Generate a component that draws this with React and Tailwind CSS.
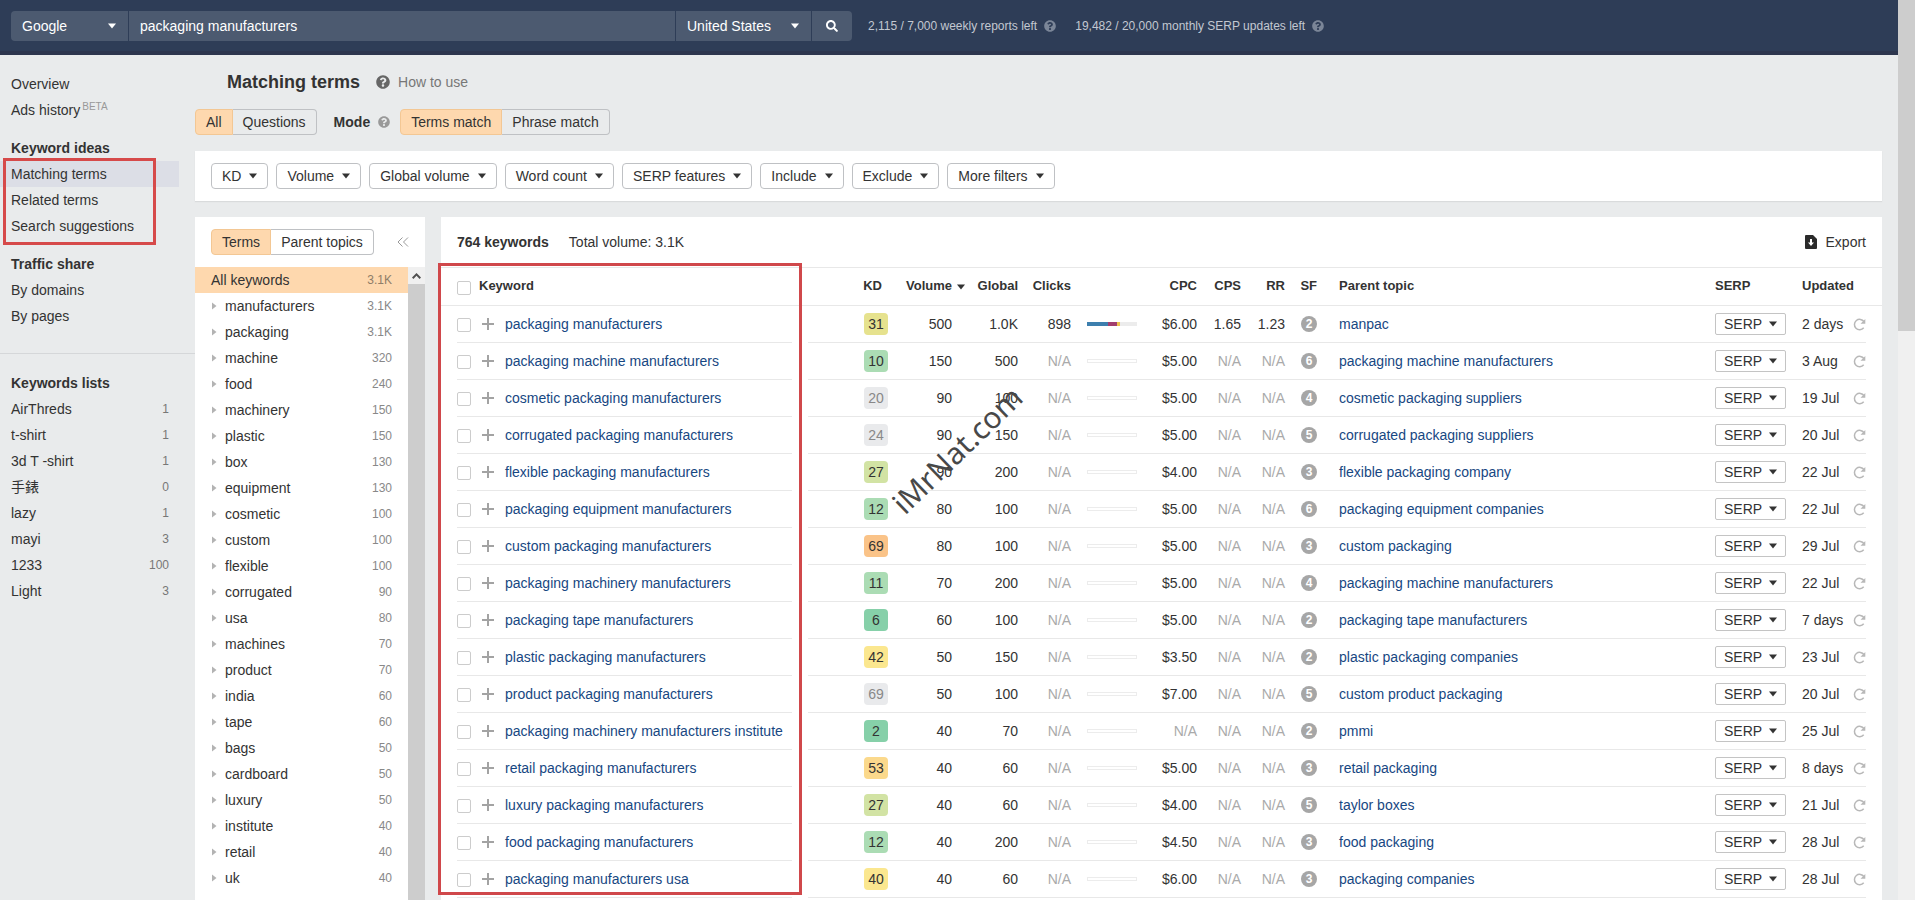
import React from "react";
import { FaQuestionCircle, FaSearch } from "react-icons/fa";

const KEYWORD_LISTS = [
  ["AirThreds", "1"],
  ["t-shirt", "1"],
  ["3d T -shirt", "1"],
  ["手錶", "0"],
  ["lazy", "1"],
  ["mayi", "3"],
  ["1233", "100"],
  ["Light", "3"],
];

const FILTERS = [
  "KD",
  "Volume",
  "Global volume",
  "Word count",
  "SERP features",
  "Include",
  "Exclude",
  "More filters",
];

const TERMS = [
  ["manufacturers", "3.1K"],
  ["packaging", "3.1K"],
  ["machine", "320"],
  ["food", "240"],
  ["machinery", "150"],
  ["plastic", "150"],
  ["box", "130"],
  ["equipment", "130"],
  ["cosmetic", "100"],
  ["custom", "100"],
  ["flexible", "100"],
  ["corrugated", "90"],
  ["usa", "80"],
  ["machines", "70"],
  ["product", "70"],
  ["india", "60"],
  ["tape", "60"],
  ["bags", "50"],
  ["cardboard", "50"],
  ["luxury", "50"],
  ["institute", "40"],
  ["retail", "40"],
  ["uk", "40"],
];

const KD_COLORS = {
  emerald: "bg-[#86d0a9] text-[#333]",
  green: "bg-[#abdcb4] text-[#333]",
  lime: "bg-[#d2e3a4] text-[#333]",
  olive: "bg-[#e6e28e] text-[#333]",
  yellow: "bg-[#fbe78f] text-[#333]",
  amber: "bg-[#fbd98c] text-[#333]",
  orange: "bg-[#fac388] text-[#333]",
  gray: "bg-[#e9eaec] text-[#888]",
};

const ROWS = [
  { kw: "packaging manufacturers", kd: "31", tone: "olive", vol: "500", global: "1.0K", clicks: "898", cpc: "$6.00", cps: "1.65", rr: "1.23", sf: "2", parent: "manpac", updated: "2 days" },
  { kw: "packaging machine manufacturers", kd: "10", tone: "green", vol: "150", global: "500", cpc: "$5.00", sf: "6", parent: "packaging machine manufacturers", updated: "3 Aug" },
  { kw: "cosmetic packaging manufacturers", kd: "20", tone: "gray", vol: "90", global: "100", cpc: "$5.00", sf: "4", parent: "cosmetic packaging suppliers", updated: "19 Jul" },
  { kw: "corrugated packaging manufacturers", kd: "24", tone: "gray", vol: "90", global: "150", cpc: "$5.00", sf: "5", parent: "corrugated packaging suppliers", updated: "20 Jul" },
  { kw: "flexible packaging manufacturers", kd: "27", tone: "lime", vol: "90", global: "200", cpc: "$4.00", sf: "3", parent: "flexible packaging company", updated: "22 Jul" },
  { kw: "packaging equipment manufacturers", kd: "12", tone: "green", vol: "80", global: "100", cpc: "$5.00", sf: "6", parent: "packaging equipment companies", updated: "22 Jul" },
  { kw: "custom packaging manufacturers", kd: "69", tone: "orange", vol: "80", global: "100", cpc: "$5.00", sf: "3", parent: "custom packaging", updated: "29 Jul" },
  { kw: "packaging machinery manufacturers", kd: "11", tone: "green", vol: "70", global: "200", cpc: "$5.00", sf: "4", parent: "packaging machine manufacturers", updated: "22 Jul" },
  { kw: "packaging tape manufacturers", kd: "6", tone: "emerald", vol: "60", global: "100", cpc: "$5.00", sf: "2", parent: "packaging tape manufacturers", updated: "7 days" },
  { kw: "plastic packaging manufacturers", kd: "42", tone: "yellow", vol: "50", global: "150", cpc: "$3.50", sf: "2", parent: "plastic packaging companies", updated: "23 Jul" },
  { kw: "product packaging manufacturers", kd: "69", tone: "gray", vol: "50", global: "100", cpc: "$7.00", sf: "5", parent: "custom product packaging", updated: "20 Jul" },
  { kw: "packaging machinery manufacturers institute", kd: "2", tone: "emerald", vol: "40", global: "70", sf: "2", parent: "pmmi", updated: "25 Jul" },
  { kw: "retail packaging manufacturers", kd: "53", tone: "amber", vol: "40", global: "60", cpc: "$5.00", sf: "3", parent: "retail packaging", updated: "8 days" },
  { kw: "luxury packaging manufacturers", kd: "27", tone: "lime", vol: "40", global: "60", cpc: "$4.00", sf: "5", parent: "taylor boxes", updated: "21 Jul" },
  { kw: "food packaging manufacturers", kd: "12", tone: "green", vol: "40", global: "200", cpc: "$4.50", sf: "3", parent: "food packaging", updated: "28 Jul" },
  { kw: "packaging manufacturers usa", kd: "40", tone: "yellow", vol: "40", global: "60", cpc: "$6.00", sf: "3", parent: "packaging companies", updated: "28 Jul" },
];

function Caret({ className = "" }) {
  return (
    <svg viewBox="0 0 8 6" className={"h-[6px] w-2 shrink-0 fill-current " + className} aria-hidden="true">
      <path d="M0 .5h8L4 5.500z" />
    </svg>
  );
}

function HeaderSelect({ label, value, className }) {
  return (
    <label className={"relative flex items-center bg-[#4c5a70] " + className}>
      <span className="sr-only">{label}</span>
      <select className="h-full w-full cursor-pointer appearance-none bg-transparent pl-[11px] text-sm leading-6 text-white outline-none">
        <option>{value}</option>
      </select>
      <Caret className="pointer-events-none absolute right-3" />
    </label>
  );
}

function Segmented({ items }) {
  return (
    <div className="flex h-[26px] shrink-0">
      {items.map((item, i) => (
        <button
          key={item}
          type="button"
          aria-pressed={i === 0}
          className={
            i === 0
              ? "rounded-l-sm border border-[#f3c794] bg-[#fed8ae] px-[10px] text-sm leading-6 whitespace-nowrap"
              : "rounded-r-sm border border-l-0 border-[#bfc1c4] px-[10px] text-sm leading-6 whitespace-nowrap"
          }
        >
          {item}
        </button>
      ))}
    </div>
  );
}

function NavLink({ children, active }) {
  return (
    <li>
      <a
        href="#"
        className={"mr-4 block h-[26px] pl-[11px] leading-[26px] " + (active ? "bg-[#dcdee6]" : "")}
      >
        {children}
      </a>
    </li>
  );
}

function Header() {
  return (
    <header className="flex h-[55px] shrink-0 items-start border-b-4 border-[#2d364e] bg-[#2e3d57] pt-[11px] pl-[11px] text-white">
      <form className="flex h-[30px] gap-px" onSubmit={(e) => e.preventDefault()}>
        <HeaderSelect label="Search engine" value="Google" className="w-[117px] rounded-l-sm" />
        <input
          type="text"
          aria-label="Keyword"
          defaultValue="packaging manufacturers"
          className="w-[546px] bg-[#4c5a70] px-[11px] text-sm text-white outline-none"
        />
        <HeaderSelect label="Country" value="United States" className="w-[135px]" />
        <button
          type="submit"
          aria-label="Search"
          className="flex w-10 items-center justify-center rounded-r-sm bg-[#4c5a70]"
        >
          <FaSearch className="size-3" />
        </button>
      </form>
      <p className="ml-4 flex h-[30px] items-center gap-[7px] text-xs text-[#c3c8d1]">
        2,115 / 7,000 weekly reports left
        <FaQuestionCircle className="size-3 text-[#7b8698]" />
      </p>
      <p className="ml-[19px] flex h-[30px] items-center gap-[7px] text-xs text-[#c3c8d1]">
        19,482 / 20,000 monthly SERP updates left
        <FaQuestionCircle className="size-3 text-[#7b8698]" />
      </p>
    </header>
  );
}

function Sidebar() {
  return (
    <nav className="w-[195px] shrink-0 pt-4" aria-label="Sections">
      <ul>
        <NavLink>Overview</NavLink>
        <NavLink>
          Ads history
          <sup className="ml-[2px] text-[10px] text-[#999]">BETA</sup>
        </NavLink>
      </ul>
      <h2 className="mt-3 h-[26px] pl-[11px] leading-[26px] font-bold">Keyword ideas</h2>
      <ul className="relative">
        <NavLink active>Matching terms</NavLink>
        <NavLink>Related terms</NavLink>
        <NavLink>Search suggestions</NavLink>
        <li
          aria-hidden="true"
          className="pointer-events-none absolute -top-[3px] left-[3px] h-[87px] w-[153px] border-3 border-[#d64a4a]"
        />
      </ul>
      <h2 className="mt-3 h-[26px] pl-[11px] leading-[26px] font-bold">Traffic share</h2>
      <ul>
        <NavLink>By domains</NavLink>
        <NavLink>By pages</NavLink>
      </ul>
      <hr className="mt-6 border-[#d5d7d9]" />
      <h2 className="mt-4 h-[26px] pl-[11px] leading-[26px] font-bold">Keywords lists</h2>
      <ul>
        {KEYWORD_LISTS.map(([name, count]) => (
          <li key={name}>
            <a href="#" className="flex h-[26px] items-center justify-between pr-[26px] pl-[11px]">
              <span>{name}</span>
              <span className="text-xs text-[#777]">{count}</span>
            </a>
          </li>
        ))}
      </ul>
    </nav>
  );
}

function TermsPanel() {
  return (
    <section className="flex w-[230px] shrink-0 flex-col bg-white" aria-label="Terms">
      <div className="flex h-[50px] shrink-0 items-center justify-between pr-4 pl-4">
        <Segmented items={["Terms", "Parent topics"]} />
        <button type="button" aria-label="Collapse panel" className="text-[#999]">
          <svg viewBox="0 0 12 10" className="h-[10px] w-3 fill-none stroke-current" aria-hidden="true">
            <path d="M5.500 .5 1 5l4.500 4.500M11 .5 6.500 5 11 9.500" />
          </svg>
        </button>
      </div>
      <div className="flex min-h-0 grow">
        <ul className="grow overflow-hidden">
          <li>
            <a href="#" className="flex h-[26px] items-center justify-between bg-[#fed8ae] px-4">
              <span>All keywords</span>
              <span className="text-xs text-[#8f7d68]">3.1K</span>
            </a>
          </li>
          {TERMS.map(([name, count]) => (
            <li key={name}>
              <a href="#" className="flex h-[26px] items-center pr-4 pl-[17px]">
                <svg viewBox="0 0 5 8" className="mr-2 h-2 w-[5px] fill-[#b3b3b3]" aria-hidden="true">
                  <path d="M0 .5v7L4.500 4z" />
                </svg>
                <span className="grow">{name}</span>
                <span className="text-xs text-[#888]">{count}</span>
              </a>
            </li>
          ))}
        </ul>
        <div className="flex w-[17px] flex-col bg-[#cdcdcd]" aria-hidden="true">
          <div className="flex h-[17px] items-center justify-center bg-[#f0f0f0]">
            <svg viewBox="0 0 9 6" className="h-[6px] w-[9px] fill-none stroke-[#505050] stroke-2">
              <path d="M.7 5.200 4.500 1.400l3.800 3.800" />
            </svg>
          </div>
        </div>
      </div>
    </section>
  );
}

function Metric({ value }) {
  return (
    <td className={"border-b border-[#e8e8e8] text-right " + (value ? "" : "text-[#aaa]")}>
      {value || "N/A"}
    </td>
  );
}

function KeywordRow({ row }) {
  const cell = "border-b border-[#e8e8e8]";
  return (
    <tr className="h-[37px]">
      <td />
      <td className={cell}>
        <input
          type="checkbox"
          aria-label={"Select " + row.kw}
          className="mt-[2px] block size-[14px] appearance-none rounded-xs border border-[#cccccc] bg-white"
        />
      </td>
      <td className={cell}>
        <button type="button" aria-label={"Add " + row.kw} className="ml-[3px] block">
          <svg viewBox="0 0 12 12" className="size-3 fill-[#a3a3a3]" aria-hidden="true">
            <path d="M5 0h2v5h5v2H7v5H5V7H0V5h5z" />
          </svg>
        </button>
      </td>
      <td className={cell}>
        <a href="#" className="whitespace-nowrap text-[#174782]">{row.kw}</a>
      </td>
      <td />
      <td className={cell}>
        <span className={"ml-auto block h-[22px] w-6 rounded-sm text-center leading-[22px] " + KD_COLORS[row.tone]}>
          {row.kd}
        </span>
      </td>
      <td className={cell + " pr-[14px] text-right"}>{row.vol}</td>
      <Metric value={row.global} />
      <Metric value={row.clicks} />
      <td className={cell + " pl-4"}>
        {row.clicks ? (
          <div className="flex h-1 bg-[#ececec]">
            <span className="w-[42%] bg-[#3d7fae]" />
            <span className="w-[17%] bg-[#a23e6e]" />
            <span className="w-[6%] bg-[#eec44f]" />
          </div>
        ) : (
          <div className="h-1 border border-[#ececec]" />
        )}
      </td>
      <Metric value={row.cpc} />
      <Metric value={row.cps} />
      <Metric value={row.rr} />
      <td className={cell}>
        <span className="ml-auto block size-4 rounded-full bg-[#a6a6a6] text-center text-xs leading-4 font-bold text-white">
          {row.sf}
        </span>
      </td>
      <td className={cell + " pl-[22px]"}>
        <a href="#" className="whitespace-nowrap text-[#174782]">{row.parent}</a>
      </td>
      <td className={cell}>
        <button
          type="button"
          aria-haspopup="menu"
          className="flex h-[22px] items-center gap-[7px] rounded-xs border border-[#c4c4c4] px-2"
        >
          SERP
          <Caret />
        </button>
      </td>
      <td className={cell + " whitespace-nowrap"}>{row.updated}</td>
      <td className={cell}>
        <button type="button" aria-label={"Refresh " + row.kw} className="block">
          <svg viewBox="0 0 13 13" className="size-[13px] fill-none stroke-[#b8b8b8]" aria-hidden="true">
            <path d="M10.700 9.800A5.200 5.200 0 1 1 11 3.700" strokeWidth="1.500" />
            <path d="M12.300 1v4.800H7.500z" className="fill-[#b8b8b8] stroke-none" />
          </svg>
        </button>
      </td>
      <td />
    </tr>
  );
}

function KeywordTable() {
  return (
    <table className="w-full table-fixed border-separate border-spacing-0">
      <colgroup>
        <col className="w-4" />
        <col className="w-[22px]" />
        <col className="w-[26px]" />
        <col className="w-[287px]" />
        <col className="w-4" />
        <col className="w-20" />
        <col className="w-[78px]" />
        <col className="w-[52px]" />
        <col className="w-[53px]" />
        <col className="w-[66px]" />
        <col className="w-[60px]" />
        <col className="w-11" />
        <col className="w-11" />
        <col className="w-8" />
        <col />
        <col className="w-[87px]" />
        <col className="w-[51px]" />
        <col className="w-[13px]" />
        <col className="w-4" />
      </colgroup>
      <thead>
        <tr className="h-[39px] text-left text-[13px] [&>*]:border-y [&>*]:border-[#e8e8e8]">
          <td />
          <th>
            <input
              type="checkbox"
              aria-label="Select all"
              className="mt-[2px] block size-[14px] appearance-none rounded-xs border border-[#cccccc] bg-white"
            />
          </th>
          <th colSpan={2}>Keyword</th>
          <td />
          <th className="pr-[6px] text-right">KD</th>
          <th>
            <span className="flex items-center justify-end gap-[5px] pr-px">
              Volume
              <Caret />
            </span>
          </th>
          <th className="text-right">Global</th>
          <th className="text-right">Clicks</th>
          <td />
          <th className="text-right">CPC</th>
          <th className="text-right">CPS</th>
          <th className="text-right">RR</th>
          <th className="text-right">SF</th>
          <th className="pl-[22px]">Parent topic</th>
          <th>SERP</th>
          <th colSpan={2}>Updated</th>
          <td />
        </tr>
      </thead>
      <tbody>
        {ROWS.map((row) => (
          <KeywordRow key={row.kw} row={row} />
        ))}
      </tbody>
    </table>
  );
}

function KeywordsPanel() {
  return (
    <section className="relative min-w-0 grow bg-white" aria-label="Keywords">
      <div className="flex h-[50px] items-center px-4">
        <strong>764 keywords</strong>
        <span className="ml-5">Total volume: 3.1K</span>
        <button type="button" className="ml-auto flex items-center gap-[9px]">
          <svg viewBox="0 0 12 14" className="h-[14px] w-3" aria-hidden="true">
            <path d="M1 0h7l4 4v9a1 1 0 0 1-1 1H1a1 1 0 0 1-1-1V1a1 1 0 0 1 1-1z" fill="#2b2b2b" />
            <path d="M5 4h2v3.500h2L6 11 3 7.500h2z" fill="#fff" />
          </svg>
          Export
        </button>
      </div>
      <KeywordTable />
      <div
        aria-hidden="true"
        className="pointer-events-none absolute top-[46px] -left-[3px] h-[632px] w-[364px] border-3 border-[#d0484b]"
      />
      <span className="pointer-events-none absolute top-[211px] left-[433px] -rotate-[44deg] font-['Noto_Sans',sans-serif] text-[30px] leading-[44px] whitespace-nowrap text-[#484848]">
        iMrNat.com
      </span>
    </section>
  );
}

export default function App() {
  return (
    <div className="flex h-screen overflow-hidden bg-[#e9ebec] font-['Liberation_Sans','Noto_Sans_CJK_TC',sans-serif] text-sm text-[#333]">
      <div className="flex min-w-0 grow flex-col">
        <Header />
        <div className="flex min-h-0 grow">
          <Sidebar />
          <main className="flex min-w-0 grow flex-col pr-4">
            <div className="mt-3 flex h-[30px] items-center pl-8">
              <h1 className="text-lg font-bold">Matching terms</h1>
              <a href="#" className="ml-4 flex items-center gap-2 text-[#777]">
                <FaQuestionCircle className="size-[14px] text-[#666]" />
                How to use
              </a>
            </div>
            <div className="mt-3 flex items-center">
              <Segmented items={["All", "Questions"]} />
              <strong className="ml-[17px]">Mode</strong>
              <FaQuestionCircle className="mr-[10px] ml-2 size-3 text-[#999]" />
              <Segmented items={["Terms match", "Phrase match"]} />
            </div>
            <div className="mt-4 flex h-[50px] shrink-0 items-center gap-2 bg-white px-4 shadow-[0_1px_1px_#d9dbdc]">
              {FILTERS.map((name) => (
                <button
                  key={name}
                  type="button"
                  aria-haspopup="menu"
                  className="flex h-[26px] items-center gap-2 rounded-sm border border-[#bfc1c4] px-[10px]"
                >
                  {name}
                  <Caret />
                </button>
              ))}
            </div>
            <div className="mt-4 flex min-h-0 grow gap-4">
              <TermsPanel />
              <KeywordsPanel />
            </div>
          </main>
        </div>
      </div>
      <div className="w-[17px] shrink-0 bg-[#f0f0f0]" aria-hidden="true">
        <div className="h-[331px] bg-[#cdcdcd]" />
      </div>
    </div>
  );
}
